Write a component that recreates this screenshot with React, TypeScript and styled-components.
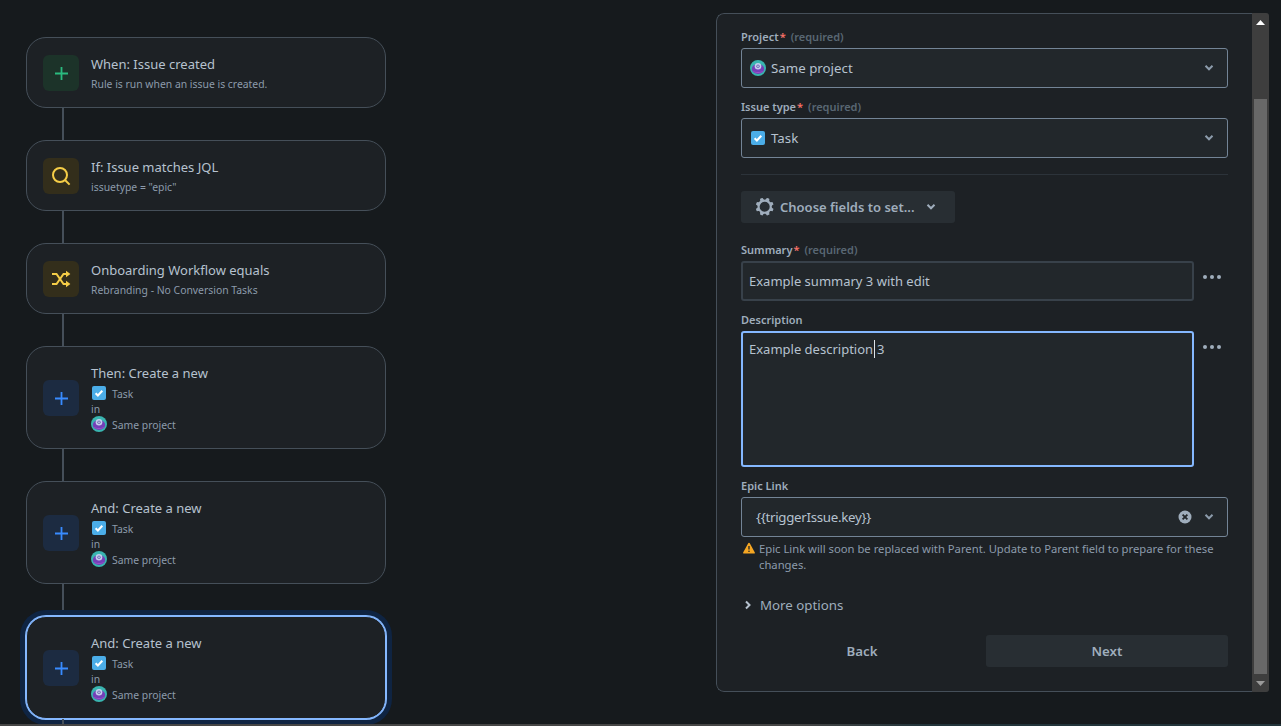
import React from "react";
import styled, { createGlobalStyle } from "styled-components";

const Global = createGlobalStyle`
  html, body { margin: 0; padding: 0; background: #161a1d; overflow: hidden; }
  * { box-sizing: border-box; }
`;

const Page = styled.div`
  width: 1281px;
  height: 726px;
  display: flex;
  flex-direction: column;
  overflow: hidden;
  background: #161a1d;
  font-family: "Noto Sans", "Liberation Sans", sans-serif;
  color: #b6c2cf;
`;
const Main = styled.div`
  flex: 1;
  min-height: 0;
  display: flex;
  justify-content: space-between;
  align-items: flex-start;
  overflow: hidden;
`;
const Strip = styled.div`
  height: 2px;
  flex: none;
  background: linear-gradient(90deg, #454545 0%, #454545 62%, #22343a 72%, #22343a 100%);
`;
const Flow = styled.div`
  width: 360px;
  margin: 37px 0 0 26px;
  display: flex;
  flex-direction: column;
`;
const Card = styled.div<{ $selected?: boolean }>`
  display: flex;
  align-items: center;
  gap: 12px;
  padding: 16px;
  border-radius: 20px;
  background: #1d2125;
  border: 1px solid #454f59;
  ${(p) =>
    p.$selected &&
    `
    border-color: #85b8ff;
    box-shadow: 0 0 0 1px #85b8ff, 0 0 0 6px #0f2442;
  `}
`;
const Connector = styled.div<{ $h?: number }>`
  width: 2px;
  height: ${(p) => p.$h ?? 32}px;
  margin-left: 36px;
  background: #454f59;
  flex: none;
`;
const IconBox = styled.div<{ $bg: string; $fg: string }>`
  width: 36px;
  height: 36px;
  flex: none;
  margin-top: 1px;
  border-radius: 6px;
  background: ${(p) => p.$bg};
  color: ${(p) => p.$fg};
  display: flex;
  align-items: center;
  justify-content: center;
`;
const CardText = styled.div`
  display: flex;
  flex-direction: column;
`;
const CardTitle = styled.div`
  font-size: 13px;
  line-height: 20px;
  color: #b6c2cf;
`;
const CardSub = styled.div`
  margin-top: 1px;
  height: 16px;
  font-size: 10.4px;
  line-height: 18px;
  color: #8c9bab;
`;
const Meta = styled.div<{ $top?: number; $h?: number }>`
  display: flex;
  align-items: center;
  gap: 5px;
  height: ${(p) => p.$h ?? 16}px;
  margin-top: ${(p) => p.$top ?? 0}px;
  font-size: 10.4px;
  color: #8c9bab;
`;
const MetaLabel = styled.span`
  margin-top: 2px;
`;
const TaskSlot = styled.span`
  width: 16px;
  display: flex;
  justify-content: center;
`;

const Panel = styled.div`
  width: 553px;
  height: 679px;
  margin: 13px 12px 0 0;
  display: flex;
  background: #1d2125;
  border-radius: 8px 3px 3px 8px;
  overflow: hidden;
`;
const Form = styled.div`
  flex: 1;
  min-width: 0;
  padding: 14px 24px 0;
  display: flex;
  flex-direction: column;
  border: 1px solid #454f59;
  border-right: none;
  border-radius: 8px 0 0 8px;
`;
const Scrollbar = styled.div`
  width: 17px;
  flex: none;
  background: #3e3e3e;
  display: flex;
  flex-direction: column;
`;
const ScrollArrow = styled.div`
  height: 18px;
  flex: none;
  display: flex;
  align-items: center;
  justify-content: center;
`;
const ScrollGap = styled.div`
  height: 68px;
  flex: none;
`;
const ScrollThumb = styled.div`
  flex: 1;
  margin: 0 2px;
  background: #686868;
`;
const Label = styled.div<{ $top?: number }>`
  height: 16px;
  margin-top: ${(p) => p.$top ?? 0}px;
  margin-bottom: 4px;
  font-size: 11px;
  line-height: 18px;
  font-weight: 600;
  color: #9fadbc;
  white-space: nowrap;
`;
const Star = styled.span`
  color: #f87168;
  margin-left: 1px;
`;
const Req = styled.span`
  color: #596773;
  margin-left: 5px;
`;
const Select = styled.div`
  height: 40px;
  padding: 0 8px;
  display: flex;
  align-items: center;
  background: #22272b;
  border: 1px solid #738496;
  border-radius: 3px;
  font-size: 13.3px;
  color: #b6c2cf;
`;
const SelectValue = styled.div`
  flex: 1;
  display: flex;
  align-items: center;
  gap: 5px;
  min-width: 0;
`;
const PlainValue = styled.span`
  padding-left: 6px;
  letter-spacing: -0.3px;
`;
const SelectIcons = styled.div`
  display: flex;
  align-items: center;
  gap: 12px;
  color: #8c9bab;
  margin-right: 5px;
`;
const Divider = styled.div`
  height: 1px;
  margin-top: 16px;
  background: #2c333a;
`;
const GearButton = styled.div`
  width: 214px;
  height: 32px;
  margin-top: 16px;
  display: flex;
  align-items: center;
  gap: 3px;
  padding-left: 12px;
  border-radius: 3px;
  background: #282e33;
  color: #9fadbc;
  font-size: 13px;
  font-weight: 600;
`;
const GearChevron = styled.span`
  display: flex;
  margin-left: 9px;
`;
const FieldRow = styled.div`
  display: flex;
  align-items: flex-start;
  gap: 9px;
`;
const TextBox = styled.div<{ $h: number; $focus?: boolean }>`
  width: 453px;
  height: ${(p) => p.$h}px;
  flex: none;
  padding: ${(p) => (p.$focus ? "6px 6px" : "0 6px")};
  display: flex;
  align-items: ${(p) => (p.$focus ? "flex-start" : "center")};
  background: #22272b;
  border: 2px solid ${(p) => (p.$focus ? "#85b8ff" : "#38414a")};
  border-radius: 3px;
  font-size: 13px;
  line-height: 20px;
  color: #b6c2cf;
`;
const Caret = styled.span`
  display: inline-block;
  width: 1px;
  height: 18px;
  background: #dee4ea;
  vertical-align: -4px;
  margin: 0 2px 0 1px;
`;
const Dots = styled.div`
  width: 18px;
  height: 4px;
  margin-top: 14px;
  display: flex;
  justify-content: space-between;
  color: #9fadbc;
`;
const Dot = styled.span`
  width: 4px;
  height: 4px;
  border-radius: 50%;
  background: currentColor;
`;
const Warning = styled.div`
  margin-top: 4px;
  display: flex;
  gap: 4px;
  font-size: 11.25px;
  line-height: 16px;
  color: #8c9bab;
`;
const WarningIcon = styled.div`
  flex: none;
  width: 14px;
  padding-left: 2px;
  padding-top: 1px;
`;
const More = styled.div`
  height: 20px;
  margin-top: 22px;
  padding-left: 3px;
  display: flex;
  align-items: center;
  gap: 8px;
  font-size: 13.3px;
  color: #9fadbc;
`;
const Actions = styled.div`
  margin-top: 20px;
  display: grid;
  grid-template-columns: 1fr 242px;
  gap: 3px;
`;
const ActionButton = styled.div<{ $solid?: boolean }>`
  height: 32px;
  display: flex;
  align-items: center;
  justify-content: center;
  border-radius: 3px;
  background: ${(p) => (p.$solid ? "#282e33" : "transparent")};
  color: #9fadbc;
  font-size: 13.3px;
  font-weight: 600;
`;

const PlusIcon = () => (
  <svg width="13" height="13" viewBox="0 0 13 13" fill="none" stroke="currentColor" strokeWidth="1.8">
    <path d="M6.500 0v13M0 6.500h13" />
  </svg>
);
const SearchIcon = () => (
  <svg width="20" height="20" viewBox="0 0 20 20" fill="none" stroke="currentColor" strokeWidth="2">
    <circle cx="9" cy="9" r="7" />
    <path d="M14 14l4.600 4.600" />
  </svg>
);
const ShuffleIcon = () => (
  <svg width="20" height="18" viewBox="0 0 20 18" fill="none" stroke="currentColor" strokeWidth="2">
    <path d="M1 4h4.500l7 10H16" />
    <path d="M1 14h4.500l7-10H16" />
    <path d="M15 .8L19.400 4 15 7.200zM15 10.800l4.400 3.200-4.400 3.200z" fill="currentColor" stroke="none" />
  </svg>
);
const TaskIcon = ({ size = 14 }: { size?: number }) => (
  <svg width={size} height={size} viewBox="0 0 14 14">
    <rect width="14" height="14" rx="2" fill="#4bade8" />
    <path d="M3.600 7.200l2.300 2.300 4.400-4.700" fill="none" stroke="#fff" strokeWidth="2" />
  </svg>
);
const ProjectIcon = () => (
  <svg width="16" height="16" viewBox="0 0 16 16">
    <circle cx="8" cy="8" r="8" fill="#39b5b0" />
    <ellipse cx="8" cy="9" rx="6.200" ry="5" fill="#7440b8" />
    <path d="M2.500 10.500c1.500 2 9.500 2 11 0-1 3-10 3-11 0z" fill="#b05ad0" />
    <circle cx="8" cy="6.300" r="3.300" fill="#c4cdee" />
    <circle cx="8" cy="6.300" r="1.700" fill="#6f6fb8" />
    <circle cx="8" cy="6.300" r=".7" fill="#e8ecfa" />
  </svg>
);
const Chevron = () => (
  <svg width="10" height="8" viewBox="0 0 10 8" fill="none" stroke="currentColor" strokeWidth="2">
    <path d="M1.500 1.800L5 5.300l3.500-3.500" />
  </svg>
);
const ChevronRight = () => (
  <svg width="8" height="10" viewBox="0 0 8 10" fill="none" stroke="#b6c2cf" strokeWidth="2">
    <path d="M2 1.500L5.500 5 2 8.500" />
  </svg>
);
const ClearIcon = () => (
  <svg width="14" height="14" viewBox="0 0 14 14">
    <circle cx="7" cy="7" r="6.500" fill="#9fadbc" />
    <path d="M4.600 4.600l4.800 4.800M9.400 4.600l-4.800 4.800" stroke="#22272b" strokeWidth="1.800" />
  </svg>
);
const GearIcon = () => (
  <svg width="24" height="24" viewBox="0 0 24 24" fill="currentColor">
    <path
      fillRule="evenodd"
      d="M11.701 16.700a5.002 5.002 0 110-10.003 5.002 5.002 0 010 10.004m8.368-3.117a1.995 1.995 0 01-1.346-1.885c0-.876.563-1.613 1.345-1.885a.48.48 0 00.315-.574 8.947 8.947 0 00-.836-1.993.477.477 0 00-.598-.195 2.040 2.040 0 01-1.290.080 1.988 1.988 0 01-1.404-1.395 2.040 2.040 0 01.076-1.297.478.478 0 00-.196-.597 8.980 8.980 0 00-1.975-.826.479.479 0 00-.574.314 1.995 1.995 0 01-1.885 1.346 1.994 1.994 0 01-1.884-1.345.482.482 0 00-.575-.315c-.708.200-1.379.485-2.004.842a.47.47 0 00-.198.582A2.002 2.002 0 014.445 7.060a.478.478 0 00-.595.196 8.946 8.946 0 00-.833 1.994.48.48 0 00.308.572 1.995 1.995 0 011.323 1.877c0 .867-.552 1.599-1.324 1.877a.479.479 0 00-.308.570 8.990 8.990 0 00.723 1.790.477.477 0 00.624.194c.595-.273 1.343-.264 2.104.238.117.077.225.185.302.300.527.800.512 1.580.198 2.188a.473.473 0 00.168.628 8.946 8.946 0 002.110.897.474.474 0 00.570-.313 1.995 1.995 0 011.886-1.353c.878 0 1.618.567 1.887 1.353a.475.475 0 00.570.313 8.964 8.964 0 002.084-.883.473.473 0 00.167-.631c-.318-.608-.337-1.393.191-2.195.077-.116.185-.225.302-.302.772-.511 1.527-.513 2.125-.230a.477.477 0 00.628-.190 8.925 8.925 0 00.728-1.793.478.478 0 00-.314-.570"
    />
  </svg>
);
const WarnIcon = () => (
  <svg width="12" height="12" viewBox="0 0 12 12">
    <path d="M6 .8a.9.9 0 01.8.5l4.900 9a.9.9 0 01-.8 1.300H1.100a.9.9 0 01-.8-1.300l4.900-9A.9.9 0 016 .8z" fill="#f5a623" />
    <path d="M6 4v3.500" stroke="#1d2125" strokeWidth="1.300" />
    <circle cx="6" cy="9.300" r=".8" fill="#1d2125" />
  </svg>
);
const ArrowUp = () => (
  <svg width="9" height="5" viewBox="0 0 9 5"><path d="M4.500 0L9 5H0z" fill="#fff" /></svg>
);
const ArrowDown = () => (
  <svg width="9" height="5" viewBox="0 0 9 5"><path d="M0 0h9L4.500 5z" fill="#9a9a9a" /></svg>
);

const ActionCard = ({ title, selected }: { title: string; selected?: boolean }) => (
  <Card $selected={selected}>
    <IconBox $bg="#1c2b41" $fg="#388bff"><PlusIcon /></IconBox>
    <CardText>
      <CardTitle>{title}</CardTitle>
      <Meta $top={3} $h={14}><TaskSlot><TaskIcon /></TaskSlot><MetaLabel>Task</MetaLabel></Meta>
      <Meta><MetaLabel>in</MetaLabel></Meta>
      <Meta><ProjectIcon /><MetaLabel>Same project</MetaLabel></Meta>
    </CardText>
  </Card>
);

const Required = () => (<><Star>*</Star><Req>(required)</Req></>);

export default function App() {
  return (
    <Page>
      <Global />
      <Main>
        <Flow>
          <Card>
            <IconBox $bg="#1c3329" $fg="#2abb7f"><PlusIcon /></IconBox>
            <CardText>
              <CardTitle>When: Issue created</CardTitle>
              <CardSub>Rule is run when an issue is created.</CardSub>
            </CardText>
          </Card>
          <Connector />
          <Card>
            <IconBox $bg="#332e1b" $fg="#f5cd47"><SearchIcon /></IconBox>
            <CardText>
              <CardTitle>If: Issue matches JQL</CardTitle>
              <CardSub>issuetype = "epic"</CardSub>
            </CardText>
          </Card>
          <Connector />
          <Card>
            <IconBox $bg="#332e1b" $fg="#f5cd47"><ShuffleIcon /></IconBox>
            <CardText>
              <CardTitle>Onboarding Workflow equals</CardTitle>
              <CardSub>Rebranding - No Conversion Tasks</CardSub>
            </CardText>
          </Card>
          <Connector />
          <ActionCard title="Then: Create a new" />
          <Connector />
          <ActionCard title="And: Create a new" />
          <Connector />
          <ActionCard title="And: Create a new" selected />
          <Connector $h={12} />
        </Flow>
        <Panel>
          <Form>
            <Label>Project<Required /></Label>
            <Select>
              <SelectValue><ProjectIcon />Same project</SelectValue>
              <SelectIcons><Chevron /></SelectIcons>
            </Select>
            <Label $top={10}>Issue type<Required /></Label>
            <Select>
              <SelectValue><TaskSlot><TaskIcon /></TaskSlot>Task</SelectValue>
              <SelectIcons><Chevron /></SelectIcons>
            </Select>
            <Divider />
            <GearButton><GearIcon />Choose fields to set...<GearChevron><Chevron /></GearChevron></GearButton>
            <Label $top={18}>Summary<Required /></Label>
            <FieldRow>
              <TextBox $h={40}>Example summary 3 with edit</TextBox>
              <Dots><Dot /><Dot /><Dot /></Dots>
            </FieldRow>
            <Label $top={10}>Description</Label>
            <FieldRow>
              <TextBox $h={136} $focus><span>Example description<Caret />3</span></TextBox>
              <Dots><Dot /><Dot /><Dot /></Dots>
            </FieldRow>
            <Label $top={10}>Epic Link</Label>
            <Select>
              <SelectValue><PlainValue>{"{{triggerIssue.key}}"}</PlainValue></SelectValue>
              <SelectIcons><ClearIcon /><Chevron /></SelectIcons>
            </Select>
            <Warning>
              <WarningIcon><WarnIcon /></WarningIcon>
              <div>Epic Link will soon be replaced with Parent. Update to Parent field to prepare for these changes.</div>
            </Warning>
            <More><ChevronRight />More options</More>
            <Actions>
              <ActionButton>Back</ActionButton>
              <ActionButton $solid>Next</ActionButton>
            </Actions>
          </Form>
          <Scrollbar>
            <ScrollArrow><ArrowUp /></ScrollArrow>
            <ScrollGap />
            <ScrollThumb />
            <ScrollArrow><ArrowDown /></ScrollArrow>
          </Scrollbar>
        </Panel>
      </Main>
      <Strip />
    </Page>
  );
}
